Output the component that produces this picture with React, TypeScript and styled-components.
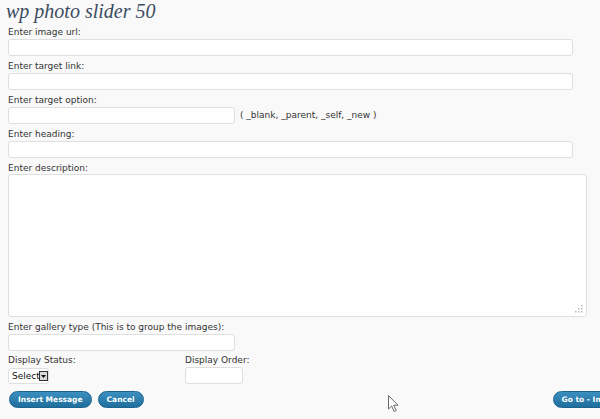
import styled, { createGlobalStyle } from "styled-components";

const GlobalStyle = createGlobalStyle`
  html, body {
    margin: 0;
    background: #f9f9f9;
    overflow: hidden;
  }
`;

const App = () => {
  return (
    <>
      <GlobalStyle />
      <Page>
        <Title>wp photo slider 50</Title>

        <Label>Enter image url:</Label>
        <TextInput type="text" $width={565} />

        <Label>Enter target link:</Label>
        <TextInput type="text" $width={565} />

        <Label>Enter target option:</Label>
        <InlineRow>
          <TextInput type="text" $width={227} />
          <Hint>( _blank, _parent, _self, _new )</Hint>
        </InlineRow>

        <Label>Enter heading:</Label>
        <TextInput type="text" $width={565} />

        <Label>Enter description:</Label>
        <AreaWrap>
          <TextArea />
          <Grip width="8" height="8" viewBox="0 0 8 8">
            <rect x="6" y="0" width="1.5" height="1.5" fill="#b8b8b8" />
            <rect x="3" y="3" width="1.5" height="1.5" fill="#b8b8b8" />
            <rect x="6" y="3" width="1.5" height="1.5" fill="#b8b8b8" />
            <rect x="0" y="6" width="1.5" height="1.5" fill="#b8b8b8" />
            <rect x="3" y="6" width="1.5" height="1.5" fill="#b8b8b8" />
            <rect x="6" y="6" width="1.5" height="1.5" fill="#b8b8b8" />
          </Grip>
        </AreaWrap>

        <Label>Enter gallery type (This is to group the images):</Label>
        <TextInput type="text" $width={227} />

        <StatusRow>
          <StatusCol $width={177}>
            <Label>Display Status:</Label>
            <FakeSelect>
              <span>Select</span>
              <ArrowBox>
                <svg width="5" height="3" viewBox="0 0 5 3">
                  <path d="M0 0 L5 0 L2.5 3 Z" fill="#111" />
                </svg>
              </ArrowBox>
            </FakeSelect>
          </StatusCol>
          <StatusCol>
            <Label>Display Order:</Label>
            <TextInput type="text" $width={58} />
          </StatusCol>
        </StatusRow>

        <ButtonRow>
          <PillButton>Insert Message</PillButton>
          <PillButton>Cancel</PillButton>
          <GoToButton>Go to - Image Management</GoToButton>
        </ButtonRow>

        <Cursor width="12" height="18" viewBox="0 0 12 18">
          <path
            d="M0.5 0.5 L0.5 14 L3.6 11 L6.2 16.5 L8.2 15.6 L5.7 10.2 L10 10.2 Z"
            fill="#fff"
            stroke="#6a6a6a"
            strokeWidth="1"
          />
        </Cursor>
      </Page>
    </>
  );
};

const Page = styled.div`
  position: relative;
  box-sizing: border-box;
  width: 600px;
  height: 419px;
  padding: 0 0 0 8px;
  font-family: "DejaVu Sans", Verdana, sans-serif;
  font-size: 9px;
  color: #333;
  overflow: hidden;
`;

const Title = styled.h2`
  margin: 0 0 3px -2px;
  font-family: "Liberation Serif", Georgia, serif;
  font-style: italic;
  font-weight: normal;
  font-size: 20px;
  line-height: 22px;
  color: #3b4c5f;
`;

const Label = styled.label`
  display: block;
  line-height: 14px;
  white-space: nowrap;
`;

const TextInput = styled.input<{ $width: number }>`
  display: block;
  box-sizing: border-box;
  width: ${(props) => props.$width}px;
  height: 17px;
  margin: 0 0 3px;
  padding: 0 3px;
  border: 1px solid #dfdfdf;
  border-radius: 3px;
  background: #fff;
  outline: none;
`;

const InlineRow = styled.div`
  display: flex;
  align-items: flex-start;
  gap: 5px;
`;

const Hint = styled.span`
  line-height: 17px;
`;

const AreaWrap = styled.div`
  position: relative;
  width: 579px;
  margin: -1px 0 3px;
`;

const TextArea = styled.textarea`
  display: block;
  box-sizing: border-box;
  width: 579px;
  height: 143px;
  margin: 0;
  border: 1px solid #dfdfdf;
  border-radius: 3px;
  background: #fff;
  resize: none;
  outline: none;
`;

const Grip = styled.svg`
  position: absolute;
  right: 4px;
  bottom: 4px;
`;

const StatusRow = styled.div`
  display: flex;
  margin-top: -1px;
`;

const StatusCol = styled.div<{ $width?: number }>`
  width: ${(props) => (props.$width ? `${props.$width}px` : "auto")};
`;

const FakeSelect = styled.div`
  box-sizing: border-box;
  display: flex;
  align-items: center;
  width: 41px;
  height: 16px;
  margin-top: 1px;
  padding-left: 3px;
  border: 1px solid #dfdfdf;
  border-radius: 3px;
  background: #fff;
  color: #111;
  overflow: hidden;
  span {
    width: 29px;
    overflow: hidden;
    white-space: nowrap;
  }
`;

const ArrowBox = styled.div`
  box-sizing: border-box;
  display: flex;
  align-items: center;
  justify-content: center;
  width: 9px;
  height: 10px;
  border: 1px solid #333;
  background: #d9d9d9;
`;

const ButtonRow = styled.div`
  display: flex;
  align-items: center;
  gap: 6px;
  margin: 4px 0 0 1px;
`;

const PillButton = styled.button`
  box-sizing: border-box;
  height: 17px;
  padding: 0 8px;
  border: 1px solid #1c6390;
  border-radius: 9px;
  background: linear-gradient(#3b8fbf, #1f6f9d);
  color: #fff;
  font-family: "DejaVu Sans", Verdana, sans-serif;
  font-weight: bold;
  font-size: 7.5px;
  white-space: nowrap;
  cursor: pointer;
`;

const GoToButton = styled(PillButton)`
  flex-shrink: 0;
  margin-left: 403px;
`;

const Cursor = styled.svg`
  position: absolute;
  left: 388px;
  top: 395px;
`;

export default App;
